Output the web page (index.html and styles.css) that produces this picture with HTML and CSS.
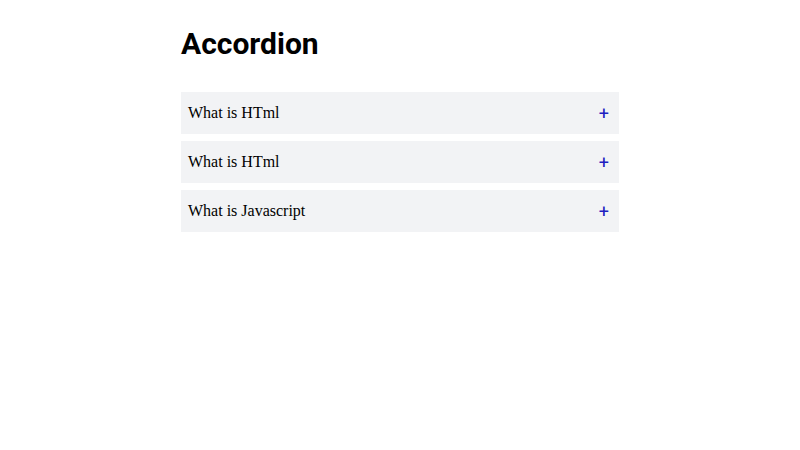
FILE: index.html
```html
<!DOCTYPE html>
<html lang="en">
<head>
    <meta charset="UTF-8">
    <meta name="viewport" content="width=device-width, initial-scale=1.0">
    <title>Accordion</title>
    <link rel="stylesheet" href="styles.css">
</head>
<body>
    <div class="container">
        <h1 class="title">Accordion</h1>

        <div class="accordion">
            <div class="item">
                <div class="question">
                    <span>What is HTml</span>
                    <span class="icon">+</span>
                </div>
            </div>
            <div class="item">
                <div class="question">
                    <span>What is HTml</span>
                    <span class="icon">+</span>
                </div>
            </div>
            <div class="item">
                <div class="question">
                    <span>What is Javascript</span>
                    <span class="icon">+</span>
                </div>
            </div>
        </div>
    </div>
</body>
</html>
```

FILE: styles.css
```css
body {
    margin: 0;
    background: white;
    font-family: "Liberation Serif", serif;
}
.container {
    width: 438px;
    margin: 0 auto;
    padding-top: 26px;
}
.title {
    font-family: Roboto, sans-serif;
    font-size: 30px;
    font-weight: bold;
    margin: 0 0 31px 0;
    color: black;
}
.accordion {
    display: flex;
    flex-direction: column;
    gap: 7px;
}
.item {
    background-color: #f2f3f5;
}
.question {
    display: flex;
    justify-content: space-between;
    align-items: center;
    height: 42px;
    padding: 0 10px 0 7px;
    font-size: 16px;
    color: black;
}
.icon {
    font-family: Roboto, sans-serif;
    font-size: 18px;
    font-weight: normal;
    color: #2020c0;
}
```
